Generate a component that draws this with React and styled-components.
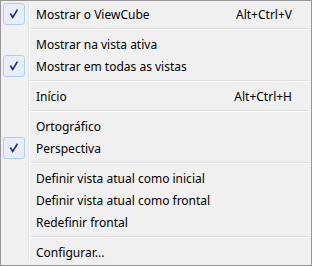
import React from "react";
import styled, { createGlobalStyle } from "styled-components";

const GlobalStyle = createGlobalStyle`
  html, body {
    margin: 0;
    padding: 0;
    background: #ffffff;
  }
`;

const StyledMenu = styled.div`
  box-sizing: border-box;
  width: 312px;
  height: 266px;
  border: 1px solid #979797;
  padding: 2px;
  background-color: #f0f0f0;
  background-image: linear-gradient(
    to right,
    transparent 28px,
    #e2e3e3 28px,
    #e2e3e3 29px,
    #ffffff 29px,
    #ffffff 30px,
    transparent 30px
  );
  background-origin: border-box;
  background-repeat: no-repeat;
  background-size: 100% calc(100% - 6px);
  background-position: 0 2px;
  font-family: "Noto Sans", "Open Sans", "DejaVu Sans", sans-serif;
  font-size: 12px;
  color: #000000;
`;

const Item = styled.div`
  display: flex;
  align-items: center;
  height: 22px;
  position: relative;
  padding-left: 33px;
  padding-right: 17px;
  white-space: nowrap;
`;

const Label = styled.span`
  flex: 1;
`;

const Shortcut = styled.span`
  text-align: right;
`;

const CheckBox = styled.span`
  position: absolute;
  left: 0;
  top: 0;
  box-sizing: border-box;
  width: 22px;
  height: 22px;
  border: 1px solid #aecff7;
  border-radius: 3px;
  background: #e6eefa;
  display: flex;
  align-items: center;
  justify-content: center;
`;

const Separator = styled.div`
  height: 8px;
  margin-left: 27px;
  display: flex;
  flex-direction: column;
  justify-content: center;

  &::before {
    content: "";
    display: block;
    height: 1px;
    background: #e0e0e0;
  }
  &::after {
    content: "";
    display: block;
    height: 1px;
    background: #ffffff;
  }
`;

const Check = () => (
  <CheckBox>
    <svg width="22" height="22" viewBox="0 0 22 22">
      <path
        d="M7 10.5 L9.6 14.8 L14.8 6.2"
        fill="none"
        stroke="#1f2a8c"
        strokeWidth="1.8"
        strokeLinejoin="miter"
      />
    </svg>
  </CheckBox>
);

const entries = [
  { label: "Mostrar o ViewCube", checked: true, shortcut: "Alt+Ctrl+V" },
  "sep",
  { label: "Mostrar na vista ativa" },
  { label: "Mostrar em todas as vistas", checked: true },
  "sep",
  { label: "Início", shortcut: "Alt+Ctrl+H" },
  "sep",
  { label: "Ortográfico" },
  { label: "Perspectiva", checked: true },
  "sep",
  { label: "Definir vista atual como inicial" },
  { label: "Definir vista atual como frontal" },
  { label: "Redefinir frontal" },
  "sep",
  { label: "Configurar..." },
];

export default function App() {
  return (
    <>
      <GlobalStyle />
      <StyledMenu>
        {entries.map((e, i) =>
          e === "sep" ? (
            <Separator key={i} />
          ) : (
            <Item key={i}>
              {e.checked && <Check />}
              <Label>{e.label}</Label>
              {e.shortcut && <Shortcut>{e.shortcut}</Shortcut>}
            </Item>
          )
        )}
      </StyledMenu>
    </>
  );
}
